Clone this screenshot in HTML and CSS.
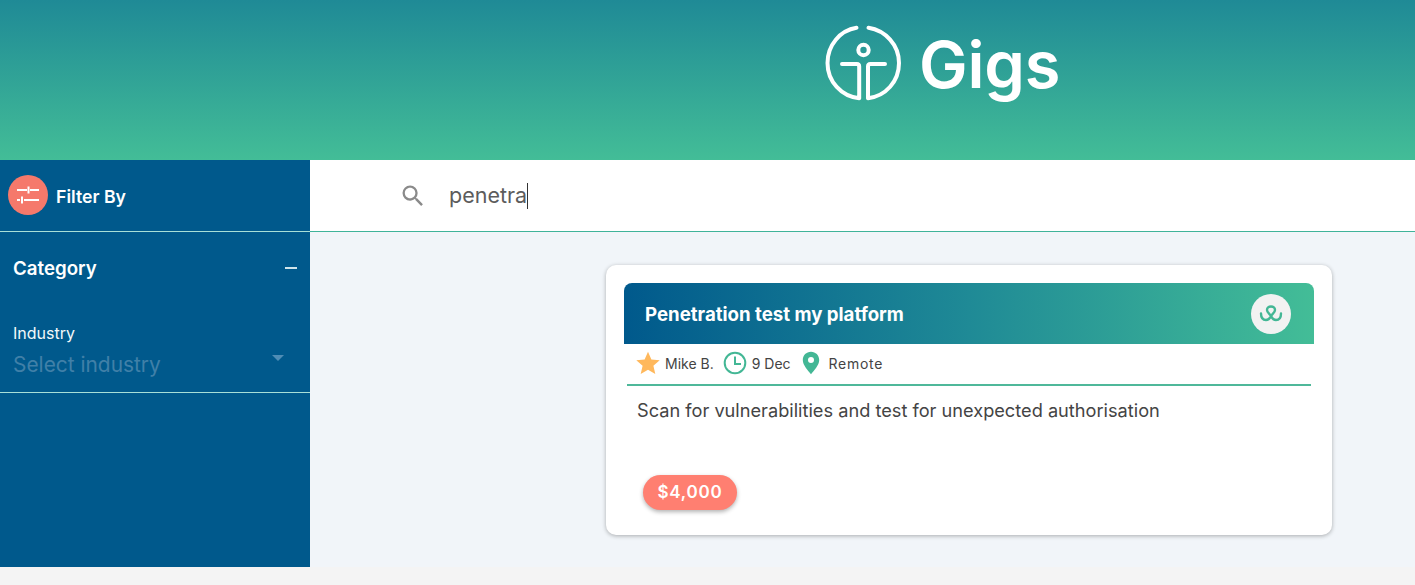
FILE: index.html
```html
<!DOCTYPE html>
<html lang="en">
<head>
<meta charset="utf-8">
<title>Gigs</title>
<link rel="stylesheet" href="styles.css">
</head>
<body>
<header class="hero">
  <div class="brand">
    <svg class="brand-mark" viewBox="0 0 77 76" fill="none" stroke="#fff" stroke-width="4" stroke-linecap="round" stroke-linejoin="round">
      <path d="M31.500 2.800C15 5.500 2.500 20 2.500 38c0 18.600 14 33.500 31.700 35.300V41.500c0-1.600-.8-2.600-2.400-2.600H17"/>
      <path d="M43.500 2.800C60.500 5.500 74 20 74 38c0 18.400-13.300 33.200-31 35.200V41.500c0-1.600.8-2.600 2.400-2.600H60"/>
      <circle cx="38.500" cy="25" r="5.200"/>
    </svg>
    <span class="brand-name">Gigs</span>
  </div>
</header>
<div class="layout">
  <aside class="sidebar">
    <div class="filter-head">
      <span class="filter-badge">
        <svg viewBox="0 0 24 24" width="24" height="24" fill="none" stroke="#fff" stroke-width="2">
          <path d="M1 7h10M14 7h9M12.500 3.500v7M1 17h3M8 17h15M6 13.500v7"/>
        </svg>
      </span>
      <span class="filter-title">Filter By</span>
    </div>
    <section class="category">
      <div class="category-head">
        <span class="category-title">Category</span>
        <span class="category-toggle"></span>
      </div>
      <div class="field-label">Industry</div>
      <div class="select-row">
        <span class="select-text">Select industry</span>
        <span class="select-arrow"></span>
      </div>
    </section>
  </aside>
  <main class="content">
    <div class="searchbar">
      <svg class="search-icon" viewBox="0 0 24 24" width="28" height="28" fill="#8a8a8a">
        <path d="M15.500 14h-.79l-.28-.27A6.470 6.470 0 0 0 16 9.500 6.500 6.500 0 1 0 9.500 16c1.610 0 3.090-.59 4.230-1.570l.27.28v.79l5 4.990L20.490 19l-4.990-5zm-6 0C7.010 14 5 11.990 5 9.500S7.010 5 9.500 5 14 7.010 14 9.500 11.990 14 9.500 14z"/>
      </svg>
      <span class="search-text">penetra</span><span class="caret"></span>
    </div>
    <div class="results">
      <article class="card">
        <div class="card-head">
          <h2 class="card-title">Penetration test my platform</h2>
          <span class="card-logo">
            <svg viewBox="0 0 24 18" width="24" height="18" fill="none" stroke="#43b795" stroke-width="2.400" stroke-linecap="round">
              <path d="M2 8.500C2 12.500 4 15 7 15C9.500 15 11 13 12 11C13.500 8.500 16 7.500 16 5C16 3 14.300 1.500 12 1.500S8 3 8 5C8 7.500 10.500 8.500 12 11C13 13 14.500 15 17 15C20 15 22 12.500 22 8.500"/>
            </svg>
          </span>
        </div>
        <div class="card-meta">
          <span class="meta-item">
            <svg viewBox="0 0 24 24" width="24" height="24" fill="#ffb85c"><path d="M12 .8l3.400 7.700 8.300.8-6.300 5.500 1.900 8.200L12 18.700 4.700 23l1.900-8.200L.3 9.300l8.300-.8z"/></svg>
            Mike B.
          </span>
          <span class="meta-item">
            <svg viewBox="0 0 24 24" width="24" height="24" fill="none" stroke="#43b795" stroke-width="2"><circle cx="12" cy="12" r="10.300"/><path d="M12 5.500V13h6"/></svg>
            9 Dec
          </span>
          <span class="meta-item meta-wide">
            <svg viewBox="0 0 24 24" width="24" height="24" fill="#43b795"><path fill-rule="evenodd" d="M12 .8c-4.700 0-8.200 3.600-8.200 8.100 0 5.200 5.300 10.400 8.200 14.300 2.900-3.900 8.200-9.100 8.200-14.300C20.200 4.400 16.700.8 12 .8zm0 5.200a3 3 0 1 1 0 6 3 3 0 0 1 0-6z"/></svg>
            Remote
          </span>
        </div>
        <p class="card-desc">Scan for vulnerabilities and test for unexpected authorisation</p>
        <span class="price">$4,000</span>
      </article>
    </div>
  </main>
</div>
</body>
</html>
```
FILE: styles.css
```css
* { box-sizing: border-box; }
html, body { margin: 0; height: 100%; }
body {
  background: #f4f4f4;
  font-family: "Inter", "Noto Sans", sans-serif;
  overflow: hidden;
}
.hero {
  height: 160px;
  background: linear-gradient(180deg, #1f8a96 0%, #43bd97 100%);
  display: flex;
  align-items: flex-start;
  padding: 25px 0 0 825px;
}
.brand { display: flex; align-items: flex-start; gap: 17px; }
.brand-mark { width: 77px; height: 76px; display: block; }
.brand-name {
  color: #fff;
  font-size: 65px;
  font-weight: 600;
  line-height: 80px;
  letter-spacing: -0.2px;
}
.layout { display: flex; height: 407px; }
.sidebar { width: 310px; flex: none; background: #00598c; color: #fff; }
.filter-head {
  height: 72px;
  border-bottom: 1px solid #a8e0d8;
  display: flex;
  align-items: center;
  padding: 0 0 1px 8px;
  gap: 8px;
}
.filter-badge {
  width: 40px;
  height: 40px;
  border-radius: 50%;
  background: #f5796b;
  display: flex;
  align-items: center;
  justify-content: center;
}
.filter-title { font-size: 17.700px; font-weight: 600; margin-top: 2px; }
.category { height: 161px; border-bottom: 1px solid #a8e0d8; padding: 0 13px; }
.category-head {
  height: 74px;
  display: flex;
  align-items: center;
  justify-content: space-between;
  padding-bottom: 2px;
}
.category-title { font-size: 18.700px; font-weight: 600; }
.category-toggle { width: 12px; height: 2px; background: #cfe4ea; }
.field-label { font-size: 16px; line-height: 20px; margin-top: 17px; color: #f2f8fa; }
.select-row {
  display: flex;
  justify-content: space-between;
  padding: 7px 13px 0 0;
}
.select-text { font-size: 20.900px; line-height: 30px; color: #4080a8; }
.select-arrow {
  margin-top: 5px;
  width: 0;
  height: 0;
  border-left: 6px solid transparent;
  border-right: 6px solid transparent;
  border-top: 6px solid #4f8db5;
}
.content { flex: 1; background: #f1f5f9; min-width: 0; }
.searchbar {
  height: 72px;
  background: #fff;
  border-bottom: 1px solid #3fb39a;
  display: flex;
  align-items: center;
  padding: 0 0 0 89px;
}
.search-icon { flex: none; margin: 1px 22px 0 0; }
.search-text { font-size: 21.500px; color: #5c5c5c; line-height: 28px; margin-bottom: 2px; }
.caret { width: 1px; height: 26px; background: #333; }
.results { padding: 33px 83px 0 296px; }
.card {
  height: 270px;
  background: #fff;
  border-radius: 10px;
  box-shadow: 0 1px 4px rgba(0, 0, 0, 0.3);
  padding: 18px;
}
.card-head {
  height: 61px;
  border-radius: 8px 8px 0 0;
  background: linear-gradient(90deg, #00598c 0%, #1f8a96 50%, #43bd97 100%);
  display: flex;
  align-items: center;
  justify-content: space-between;
  padding: 0 23px 0 21px;
}
.card-title { margin: 1px 0 0; color: #fff; font-size: 18.650px; font-weight: 700; }
.card-logo {
  width: 40px;
  height: 40px;
  border-radius: 50%;
  background: #f2f2f2;
  display: flex;
  align-items: center;
  justify-content: center;
}
.card-meta {
  margin: 0 3px;
  height: 42px;
  border-bottom: 2px solid #4fb89a;
  display: flex;
  align-items: center;
  padding: 0 0 2px 9px;
  gap: 9px;
  font-size: 14px;
  color: #444;
}
.meta-item { display: flex; align-items: center; gap: 5px; }
.meta-wide { letter-spacing: 0.7px; margin-left: -1px; gap: 6px; }
.card-desc { margin: 13px 0 0 13px; font-size: 18.200px; line-height: 22px; color: #444; }
.price {
  display: inline-block;
  margin: 54px 0 0 19px;
  width: 94px;
  height: 35px;
  border-radius: 18px;
  background: #ff7f71;
  box-shadow: 0 2px 4px rgba(0, 0, 0, 0.3);
  color: #fff;
  font-size: 17px;
  font-weight: 600;
  line-height: 34px;
  text-align: center;
  letter-spacing: 0.8px;
}
```
